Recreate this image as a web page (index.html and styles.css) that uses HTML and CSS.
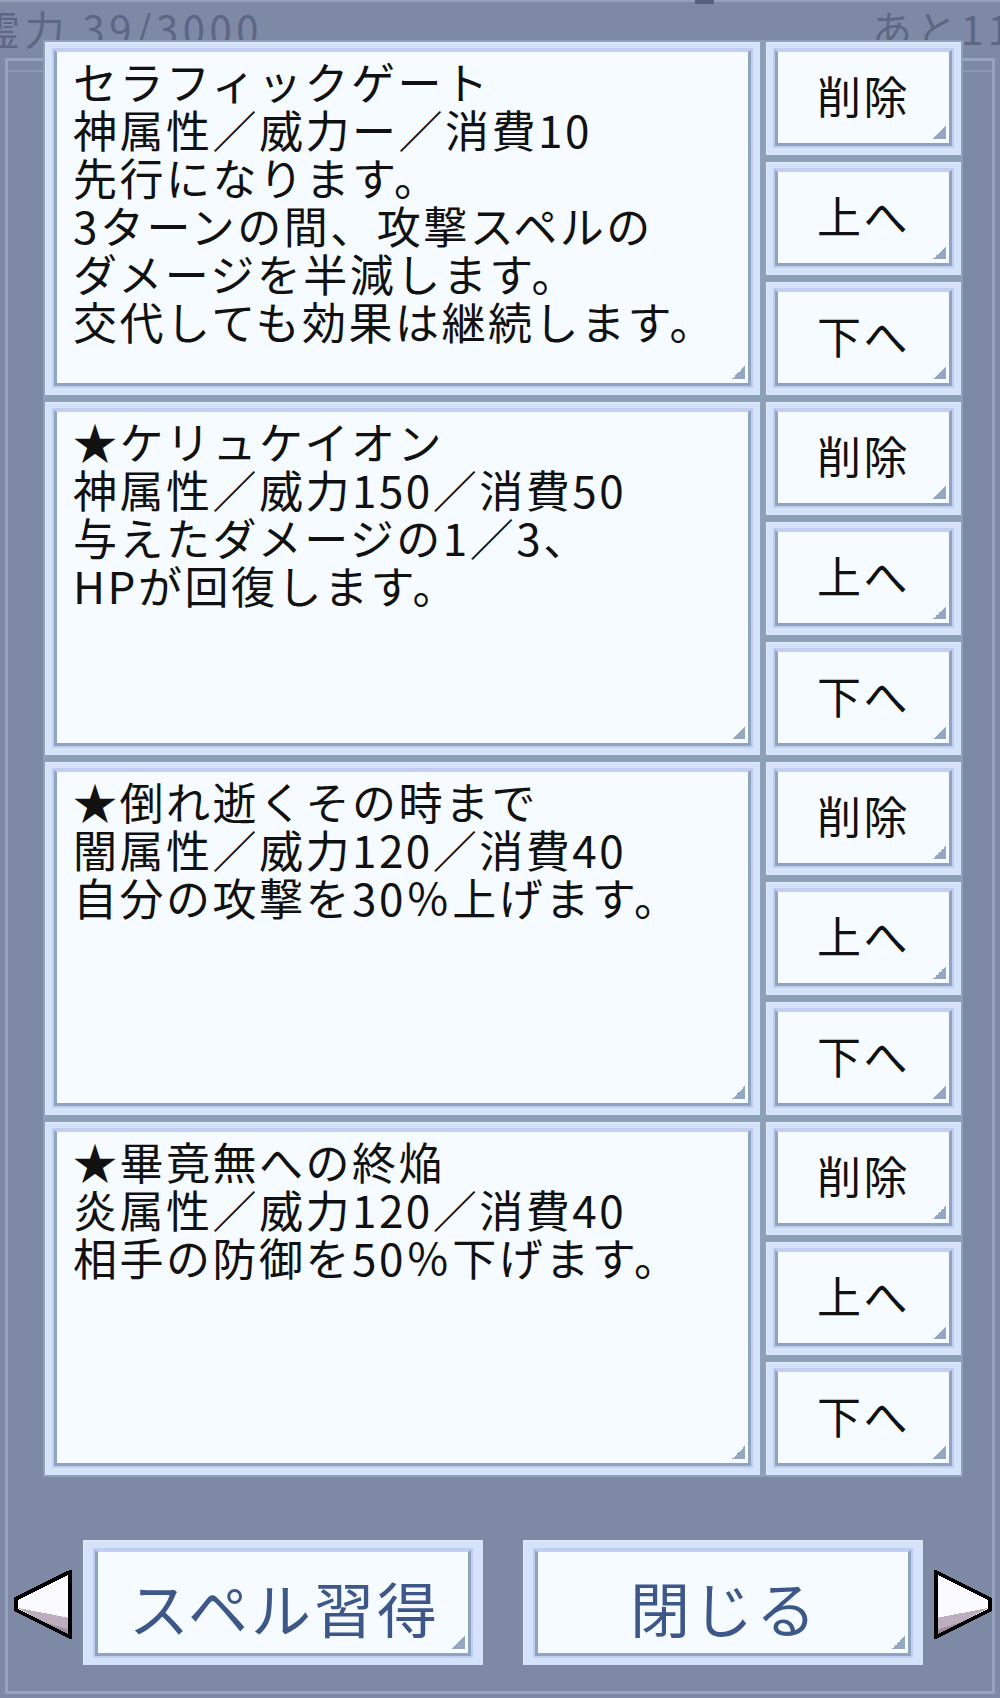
FILE: index.html
```html
<!DOCTYPE html>
<html lang="ja">
<head>
<meta charset="utf-8">
<title>スペル編成</title>
<link rel="stylesheet" href="styles.css">
</head>
<body>
<div class="scene">
  <div class="backdrop">
    <div class="hud">
      <span class="hud-left">霊力 39/3000</span>
      <span class="hud-mark"></span>
      <span class="hud-right">あと11体</span>
    </div>
    <div class="bg-window"><div class="bg-head"></div></div>
  </div>

  <div class="modal">
    <div class="spell-list">
      <div class="spell-row">
        <div class="card desc"><div class="inner">セラフィックゲート<br>神属性／威力ー／消費10<br>先行になります。<br>3ターンの間、攻撃スペルの<br>ダメージを半減します。<br>交代しても効果は継続します。</div></div>
        <div class="actions">
          <div class="card btn"><div class="inner">削除</div></div>
          <div class="card btn"><div class="inner">上へ</div></div>
          <div class="card btn"><div class="inner">下へ</div></div>
        </div>
      </div>
      <div class="spell-row">
        <div class="card desc"><div class="inner">★ケリュケイオン<br>神属性／威力150／消費50<br>与えたダメージの1／3、<br>HPが回復します。</div></div>
        <div class="actions">
          <div class="card btn"><div class="inner">削除</div></div>
          <div class="card btn"><div class="inner">上へ</div></div>
          <div class="card btn"><div class="inner">下へ</div></div>
        </div>
      </div>
      <div class="spell-row">
        <div class="card desc"><div class="inner">★倒れ逝くその時まで<br>闇属性／威力120／消費40<br>自分の攻撃を30％上げます。</div></div>
        <div class="actions">
          <div class="card btn"><div class="inner">削除</div></div>
          <div class="card btn"><div class="inner">上へ</div></div>
          <div class="card btn"><div class="inner">下へ</div></div>
        </div>
      </div>
      <div class="spell-row">
        <div class="card desc"><div class="inner">★畢竟無への終焔<br>炎属性／威力120／消費40<br>相手の防御を50％下げます。</div></div>
        <div class="actions">
          <div class="card btn"><div class="inner">削除</div></div>
          <div class="card btn"><div class="inner">上へ</div></div>
          <div class="card btn"><div class="inner">下へ</div></div>
        </div>
      </div>
    </div>

    <div class="footer">
      <svg class="arrow" viewBox="0 0 58 69" width="58" height="69" shape-rendering="crispEdges">
        <polygon points="56,2 56,67 2,40 2,29" fill="#fbfbff"/>
        <polygon points="4,38 56,48 56,67" fill="#bcaebe"/>
        <polygon points="20,49 56,60 56,67" fill="#9f8fa0"/>
        <polygon points="56,2 56,67 2,40 2,29" fill="none" stroke="#000" stroke-width="4" stroke-linejoin="miter"/>
      </svg>
      <div class="card big"><div class="inner">スペル習得</div></div>
      <div class="card big"><div class="inner">閉じる</div></div>
      <svg class="arrow right" viewBox="0 0 58 69" width="60" height="69" shape-rendering="crispEdges">
        <polygon points="56,2 56,67 2,40 2,29" fill="#fbfbff"/>
        <polygon points="4,38 56,48 56,67" fill="#bcaebe"/>
        <polygon points="20,49 56,60 56,67" fill="#9f8fa0"/>
        <polygon points="56,2 56,67 2,40 2,29" fill="none" stroke="#000" stroke-width="4" stroke-linejoin="miter"/>
      </svg>
    </div>
  </div>
</div>
</body>
</html>
```

FILE: styles.css
```css
html, body {
  margin: 0;
  padding: 0;
  background: #7e89a6;
}

.scene {
  position: relative;
  width: 1000px;
  height: 1698px;
  overflow: hidden;
  background: #7e89a6;
  font-family: "Noto Sans CJK JP", "Noto Sans", sans-serif;
}

/* dimmed window behind the dialog */
.backdrop {
  height: 1698px;
  border-top: 2px solid #95a0bb;
  box-sizing: border-box;
}

.hud {
  height: 56px;
  display: flex;
  align-items: center;
  color: #5d6684;
  font-size: 40px;
  letter-spacing: 4.5px;
  line-height: 1;
  white-space: nowrap;
}

.hud-left {
  margin-left: -20px;
  margin-top: -4px;
}

.hud-mark {
  width: 19px;
  height: 4px;
  background: #59607a;
  align-self: flex-start;
  margin-left: 432px;
  margin-top: -2px;
}

.hud-right {
  margin-left: auto;
  margin-right: -59px;
  margin-top: -4px;
}

.bg-window {
  margin: 0 5px;
  height: 1630px;
  border: 3px solid #99a3bf;
}

.bg-head {
  height: 9px;
  border-bottom: 2px solid #8c97b4;
}

/* dialog */
.modal {
  position: absolute;
  left: 0;
  top: 0;
  width: 1000px;
  height: 1698px;
}

.spell-list {
  margin: 40px 0 0 43px;
  width: 920px;
  box-sizing: border-box;
  padding: 2px;
  background: #8ca1b8;
  display: grid;
  gap: 7px;
}

.spell-row {
  display: grid;
  grid-template-columns: 715px 195px;
  gap: 6px;
  height: 353px;
}

.actions {
  display: grid;
  grid-template-rows: repeat(3, 113px);
  gap: 7px;
}

.card {
  box-sizing: border-box;
  background: #d4e2fa;
  border-top: 1px solid #e2ecfc;
  border-left: 1px solid #e2ecfc;
  padding: 7px 9px 9px 8px;
  display: flex;
}

.inner {
  flex: 1;
  box-sizing: border-box;
  background:
    linear-gradient(135deg, transparent 50%, #93a8c0 50%) right 3px bottom 4px / 13px 13px no-repeat,
    #f5fbff;
  border-style: solid;
  border-width: 2px 3px 3px 3px;
  border-color: #c3cff3 #8fa5bd #8fa5bd #8fa5bd;
  box-shadow: 0 0 0 2px #c0ccf1;
  color: #111;
}

.desc .inner {
  padding: 5px 8px 0 16px;
  font-size: 44px;
  line-height: 48px;
  letter-spacing: 2.5px;
  white-space: nowrap;
  overflow: hidden;
}

.btn .inner {
  display: flex;
  align-items: center;
  justify-content: center;
  padding: 0 0 6px 0;
  font-size: 44px;
  letter-spacing: 2.5px;
  line-height: 1;
}

/* footer */
.footer {
  margin-top: 63px;
  display: flex;
  align-items: center;
  padding-left: 14px;
}

.arrow {
  display: block;
  margin-top: 4px;
}

.arrow.right {
  transform: scaleX(-1);
  margin-left: 10px;
}

.card.big {
  width: 400px;
  height: 125px;
  padding: 9px 12px 9px 11px;
  margin-left: 11px;
}

.card.big + .card.big {
  margin-left: 40px;
}

.big .inner {
  display: flex;
  align-items: center;
  justify-content: center;
  padding: 8px 0 0 3px;
  font-size: 60px;
  letter-spacing: 3px;
  color: #3e5789;
  line-height: 1;
}
```
